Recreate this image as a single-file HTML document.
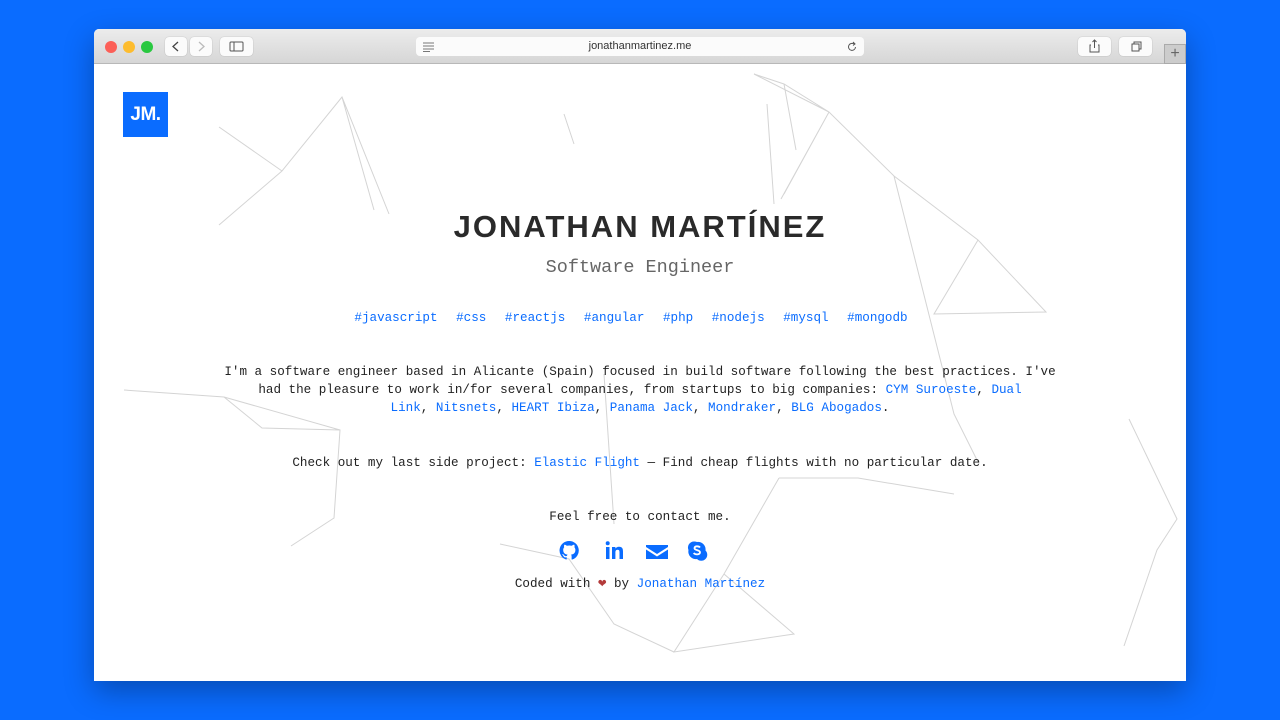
<!DOCTYPE html>
<html><head><meta charset="utf-8"><style>
*{margin:0;padding:0;box-sizing:border-box}
body{width:1280px;height:720px;background:#0a6cff;position:relative;overflow:hidden;font-family:"Liberation Mono",monospace}
.win{position:absolute;left:94px;top:29px;width:1092px;height:652px;background:#fff;border-radius:5px 5px 0 0;overflow:hidden;box-shadow:0 10px 30px rgba(0,0,0,.3)}
.bar{height:35px;background:linear-gradient(#ececec,#d6d6d6);border-bottom:1px solid #b8b8b8;position:relative}
.dot{position:absolute;top:12px;width:12px;height:12px;border-radius:50%}
.btn{position:absolute;top:8px;height:19px;background:#fbfbfb;border-radius:4px;box-shadow:0 0 1px rgba(0,0,0,.3)}
.url{position:absolute;left:322px;top:8px;width:448px;height:19px;background:#fbfbfb;border-radius:4px;font:11px "Liberation Sans",sans-serif;color:#333;text-align:center;line-height:19px}
.logo{position:absolute;left:29px;top:63px;width:45px;height:45px;background:#0a6cff;color:#fff;font:bold 19px "Liberation Sans",sans-serif;text-align:center;line-height:46px;letter-spacing:-.5px}
.c{position:absolute;left:0;width:1092px;text-align:center;font-size:12.6px;color:#222;line-height:18px}
a{color:#0a6cff;text-decoration:none}
svg.net{position:absolute;left:0;top:35px}
</style></head><body>
<div class="win">
<div class="bar">
<div class="dot" style="left:11px;background:#fc5f57"></div>
<div class="dot" style="left:29px;background:#fdbc2e"></div>
<div class="dot" style="left:47px;background:#29c840"></div>
<div class="btn" style="left:71px;width:22px"><svg width="22" height="19"><path d="M13 5l-5 4.5 5 4.5" stroke="#444" fill="none" stroke-width="1.3"/></svg></div>
<div class="btn" style="left:96px;width:22px"><svg width="22" height="19"><path d="M9 5l5 4.5-5 4.5" stroke="#bbb" fill="none" stroke-width="1.3"/></svg></div>
<div class="btn" style="left:126px;width:33px"><svg width="33" height="19"><rect x="10" y="5" width="13" height="9" rx="1" stroke="#555" fill="none"/><line x1="14" y1="5" x2="14" y2="14" stroke="#555"/></svg></div>
<div class="url"><svg style="position:absolute;left:6px;top:5px" width="14" height="10"><path d="M1 1h11M1 4h11M1 7h11M1 9.5h7" stroke="#777"/></svg>jonathanmartinez.me<svg style="position:absolute;right:6px;top:4px" width="12" height="12"><path d="M9.5 6a3.5 3.5 0 1 1-1.5-3" stroke="#555" fill="none"/><path d="M7 1l2 2-2 1.5" stroke="#555" fill="none"/></svg></div>
<div class="btn" style="left:984px;width:33px"><svg width="33" height="19"><path d="M13 8h-1v7h9V8h-1M16.5 3v8M14.5 5l2-2 2 2" stroke="#555" fill="none"/></svg></div>
<div class="btn" style="left:1025px;width:33px"><svg width="33" height="19"><rect x="13" y="7" width="7" height="7" stroke="#555" fill="none"/><path d="M15 7V5h7v7h-2" stroke="#555" fill="none"/></svg></div>
<div style="position:absolute;left:1070px;top:15px;width:22px;height:20px;background:#ccc;border:1px solid #aaa;color:#666;font:16px 'Liberation Sans';text-align:center;line-height:18px">+</div>
</div>
<svg class="net" width="1092" height="617" stroke="#d4d4d4" fill="none" stroke-width="1">
<path d="M125 63L188 107 248 33 295 150M188 107L125 161M248 33L280 146 M470 50L480 80 M660 10L690 20 735 48 800 112 884 176 952 248 840 250 884 176M735 48L690 130 M690 20L702 86 M660 10L735 48 M735 48L687 135M800 112L860 350 885 400 M30 326L130 333 168 364 246 366 240 454 197 482 M130 333L246 366 M685 414L764 414 860 430 M685 414L630 510 580 588 700 570 630 510 M406 480L475 495 520 560 580 588 M510 310L520 460 M1035 355L1083 455 1063 486 1030 582 M673 40L680 140"/>
</svg>
<div class="logo">JM.</div>
<div class="c" style="top:178px;font:bold 31px 'Liberation Sans',sans-serif;color:#2a2a2a;line-height:40px;letter-spacing:2px">JONATHAN MARTÍNEZ</div>
<div class="c" style="top:227px;font-size:18.5px;color:#666;line-height:24px">Software Engineer</div>
<div class="c" style="top:280px;left:-9px;word-spacing:11px"><a>#javascript</a> <a>#css</a> <a>#reactjs</a> <a>#angular</a> <a>#php</a> <a>#nodejs</a> <a>#mysql</a> <a>#mongodb</a></div>
<div class="c" style="top:334px">I'm a software engineer based in Alicante (Spain) focused in build software following the best practices. I've<br>had the pleasure to work in/for several companies, from startups to big companies: <a>CYM Suroeste</a>, <a>Dual</a><br><a>Link</a>, <a>Nitsnets</a>, <a>HEART Ibiza</a>, <a>Panama Jack</a>, <a>Mondraker</a>, <a>BLG Abogados</a>.</div>
<div class="c" style="top:425px">Check out my last side project: <a>Elastic Flight</a> — Find cheap flights with no particular date.</div>
<div class="c" style="top:479px">Feel free to contact me.</div>
<div style="position:absolute;top:511px;left:465px;width:160px;height:22px">
<svg width="160" height="22" fill="#0a6cff">
<path d="M10 1a9.5 9.5 0 0 0-3 18.5c.5.1.7-.2.7-.5v-1.7c-2.7.6-3.2-1.2-3.2-1.2-.4-1-1-1.4-1-1.4-.9-.6.1-.6.1-.6 1 .1 1.5 1 1.5 1 .9 1.5 2.3 1 2.9.8.1-.6.3-1 .6-1.3-2.1-.2-4.4-1-4.4-4.7 0-1 .4-1.9 1-2.6-.1-.2-.4-1.2.1-2.5 0 0 .8-.3 2.6 1a9 9 0 0 1 4.8 0c1.8-1.3 2.6-1 2.6-1 .5 1.3.2 2.3.1 2.5.6.7 1 1.6 1 2.6 0 3.7-2.3 4.5-4.4 4.7.3.3.6.9.6 1.8V19c0 .3.2.6.7.5A9.5 9.5 0 0 0 10 1z"/>
<rect x="47" y="7" width="3.5" height="12"/><circle cx="48.7" cy="3.2" r="2"/><path d="M53 7h3.4v1.6c.6-1 1.8-1.9 3.6-1.9 3.5 0 4 2.2 4 5V19h-3.5v-6.3c0-1.5 0-3-1.9-3s-2.2 1.4-2.2 3V19H53z"/>
<path d="M87 5h22v2l-11 7-11-7zM87 9.5l11 7 11-7V19H87z"/>
<path d="M135 1.5a6 6 0 0 0-5.5 8.5 7.5 7.5 0 0 0 8.5 9 6 6 0 0 0 8.5-8.5 7.5 7.5 0 0 0-8.5-8.5A6 6 0 0 0 135 1.5z"/>
<path d="M141 7.5c-1-1.3-5-2-5.5.5-.4 2.6 5.5 1.6 5.5 4.3 0 2.7-5 2.5-6.3.7" stroke="#fff" stroke-width="1.8" fill="none"/>
</svg></div>
<div class="c" style="top:546px">Coded with <span style="color:#b33a3a;font-size:14px">❤</span> by <a>Jonathan Martínez</a></div>
</div>
</body></html>
